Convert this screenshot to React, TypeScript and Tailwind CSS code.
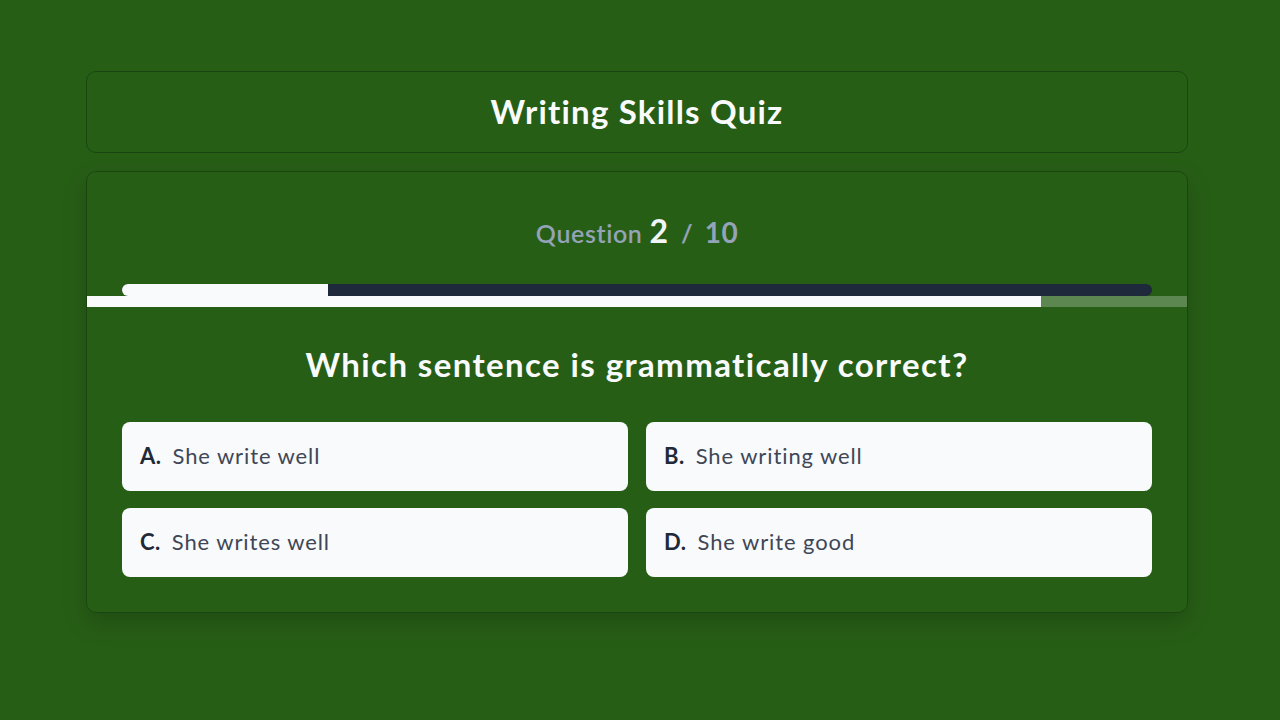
import React from "react";

const options = [
  { l: "A.", t: "She write well" },
  { l: "B.", t: "She writing well" },
  { l: "C.", t: "She writes well" },
  { l: "D.", t: "She write good" },
];

export default function App() {
  return (
    <div
      className="w-[1280px] h-[720px] bg-[#275e16] pt-[71px]"
      style={{ fontFamily: "Lato, 'Noto Sans', sans-serif" }}
    >
      <div className="ml-[86px] w-[1102px] flex flex-col gap-[18px]">
        <div className="h-[82px] rounded-[10px] border border-[#1a4510] flex items-center justify-center">
          <h1 className="text-[33px] font-bold text-[#f8fafc] tracking-[1.2px]">Writing Skills Quiz</h1>
        </div>
        <div className="rounded-[10px] border border-[#1a4510] shadow-[0_10px_25px_rgba(0,0,0,0.18)] pt-[35px] pb-[35px]">
          <div className="flex items-baseline justify-center gap-[7px] h-[40px]">
            <span className="text-[25px] font-semibold text-[#94a3b8] tracking-[0.6px]">Question</span>
            <span className="text-[32px] font-bold text-[#f1f5f9]">2</span>
            <span className="text-[25px] font-bold text-[#94a3b8] ml-[6px]">/</span>
            <span className="text-[28px] font-bold text-[#94a3b8] ml-[5px] tracking-[0.5px]">10</span>
          </div>
          <div className="mt-[37px] mx-[35px] h-[12px] rounded-full bg-[#1e293b] flex">
            <div className="w-[206px] h-full bg-[#f8fafc] rounded-l-full" />
          </div>
          <div className="h-[11px] flex">
            <div className="w-[954px] h-full bg-[#f8fafc]" />
            <div className="flex-1 h-full bg-[#5c8750]" />
          </div>
          <h2 className="mt-[37px] text-center text-[33px] leading-[40px] font-bold text-[#f8fafc] tracking-[1.4px]">
            Which sentence is grammatically correct?
          </h2>
          <div className="mt-[38px] mx-[35px] grid grid-cols-2 gap-x-[18px] gap-y-[17px]">
            {options.map((o) => (
              <div
                key={o.l}
                className="h-[69px] rounded-[8px] bg-[#f8fafc] flex items-center px-[18px] text-[22px] pb-[2px]"
              >
                <span className="font-bold text-[#1f2937] mr-[11px] tracking-[0.5px]">{o.l}</span>
                <span className="text-[#3f4756] tracking-[0.9px]">{o.t}</span>
              </div>
            ))}
          </div>
        </div>
      </div>
    </div>
  );
}
